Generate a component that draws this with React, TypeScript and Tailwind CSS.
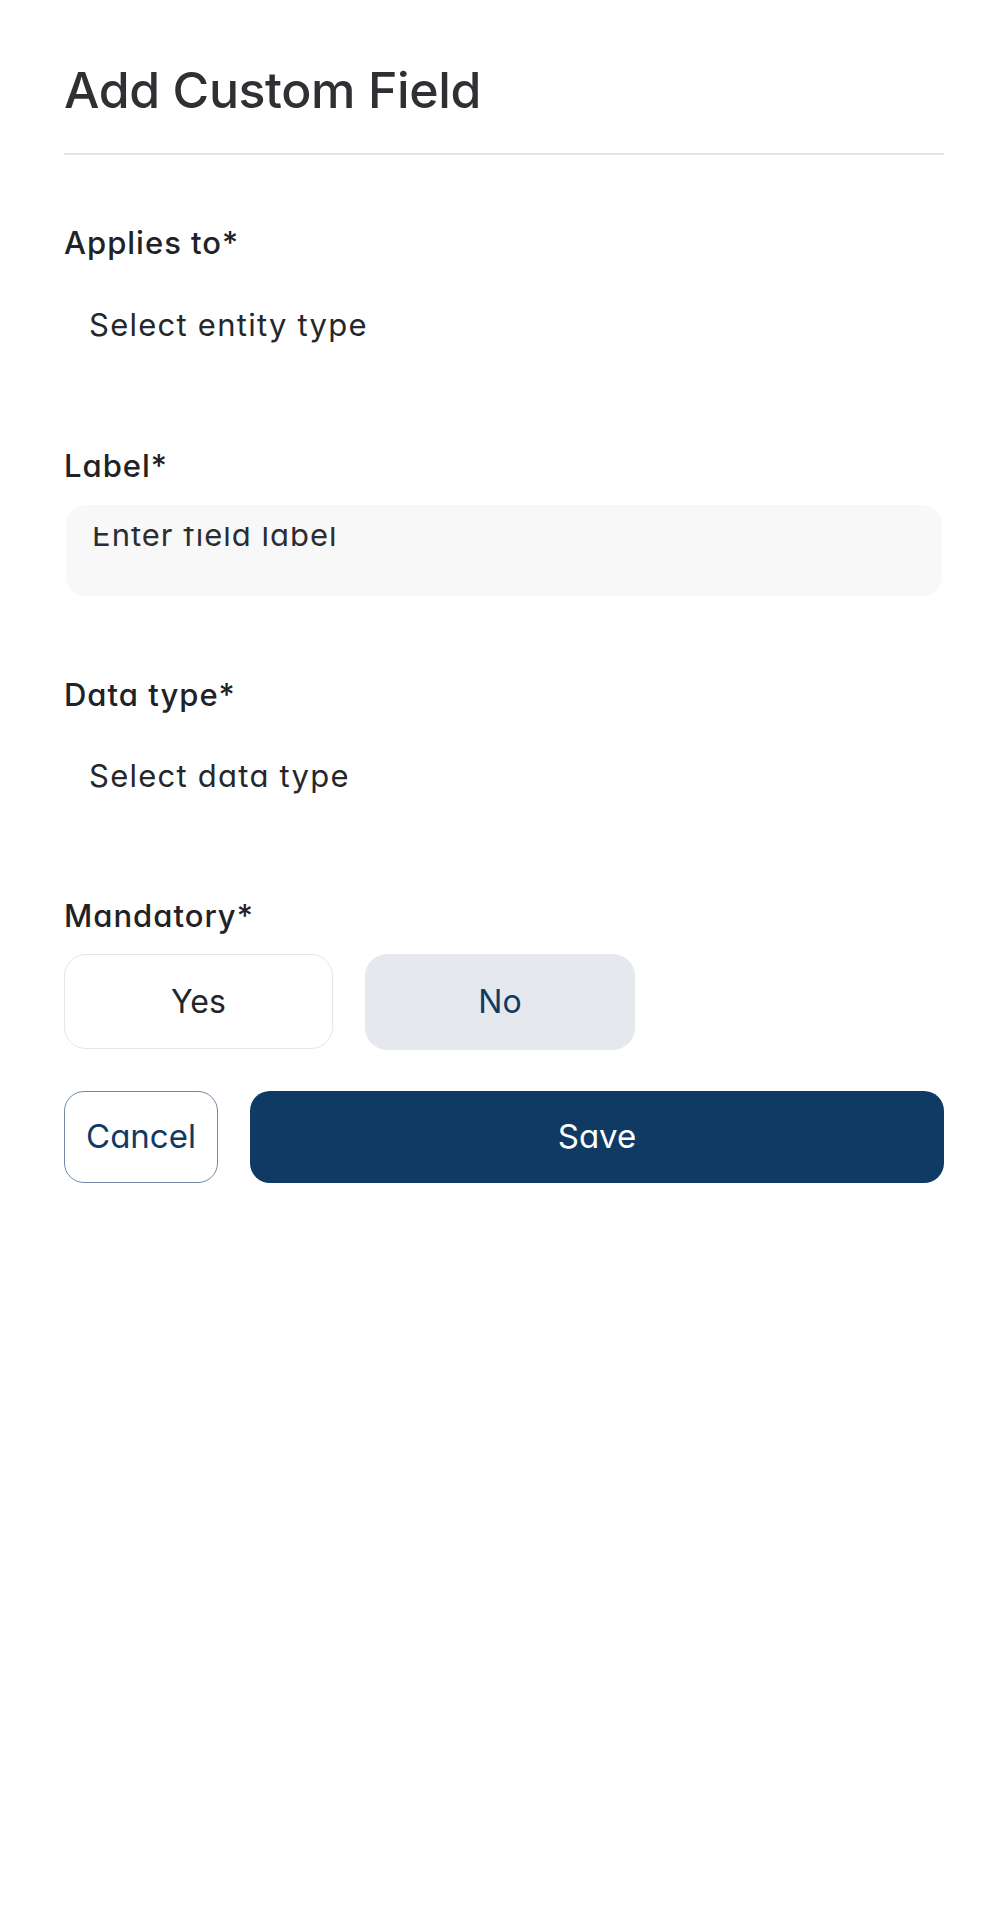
const font = { fontFamily: 'Inter, "Noto Sans", sans-serif', fontFeatureSettings: '"cv11"' };

function FieldLabel({ children, className }: { children: string; className?: string }) {
  return (
    <div className={`text-[31px] leading-[40px] font-medium tracking-[1px] text-[#1f2226] ${className ?? ''}`}>
      {children}
    </div>
  );
}

function SelectStub({ placeholder, className }: { placeholder: string; className?: string }) {
  return (
    <div className={`pl-[25px] text-[31px] leading-[40px] text-[#24272b] tracking-[1.25px] ${className ?? ''}`}>
      {placeholder}
    </div>
  );
}

export default function App() {
  return (
    <div className="min-h-screen bg-white px-16 pt-[60px]" style={font}>
      {/* Header */}
      <h1 className="text-[50px] leading-[60px] font-medium tracking-[-0.4px] text-[#2e3033]">Add Custom Field</h1>
      <div className="mt-[33px] h-[2px] bg-[#e3e3e3]" />

      {/* Applies to */}
      <FieldLabel className="mt-[68px]">Applies to*</FieldLabel>
      <SelectStub className="mt-[42px]" placeholder="Select entity type" />

      {/* Label */}
      <FieldLabel className="mt-[101px]">Label*</FieldLabel>
      <div className="mt-[19px] mx-[2px] h-[91px] rounded-[20px] bg-[#f8f8f8] pt-[22px] px-[26px]">
        <div className="h-[50px] overflow-hidden">
          <div className="-mt-[12px] text-[31px] leading-[40px] text-[#2a2d31] tracking-[1px]">Enter field label</div>
        </div>
      </div>

      {/* Data type */}
      <FieldLabel className="mt-[79px]">Data type*</FieldLabel>
      <SelectStub className="mt-[41px]" placeholder="Select data type" />

      {/* Mandatory */}
      <FieldLabel className="mt-[100px]">Mandatory*</FieldLabel>
      <div className="mt-[18px] flex gap-8">
        <button className="w-[269px] h-[95px] rounded-[22px] border border-[#e6e6e6] bg-white text-[32px] text-[#222529]">
          Yes
        </button>
        <button className="w-[270px] h-[96px] rounded-[22px] bg-[#e5e9ee] text-[32px] text-[#0f3a63]">No</button>
      </div>

      {/* Actions */}
      <div className="mt-[41px] flex gap-8">
        <button className="w-[154px] h-[92px] rounded-[20px] border-[1.5px] border-[#7089a7] bg-white text-[33px] text-[#0f3a63]">
          Cancel
        </button>
        <button className="flex-1 h-[92px] rounded-[20px] bg-[#0f3a63] text-[33px] text-white">Save</button>
      </div>
    </div>
  );
}
